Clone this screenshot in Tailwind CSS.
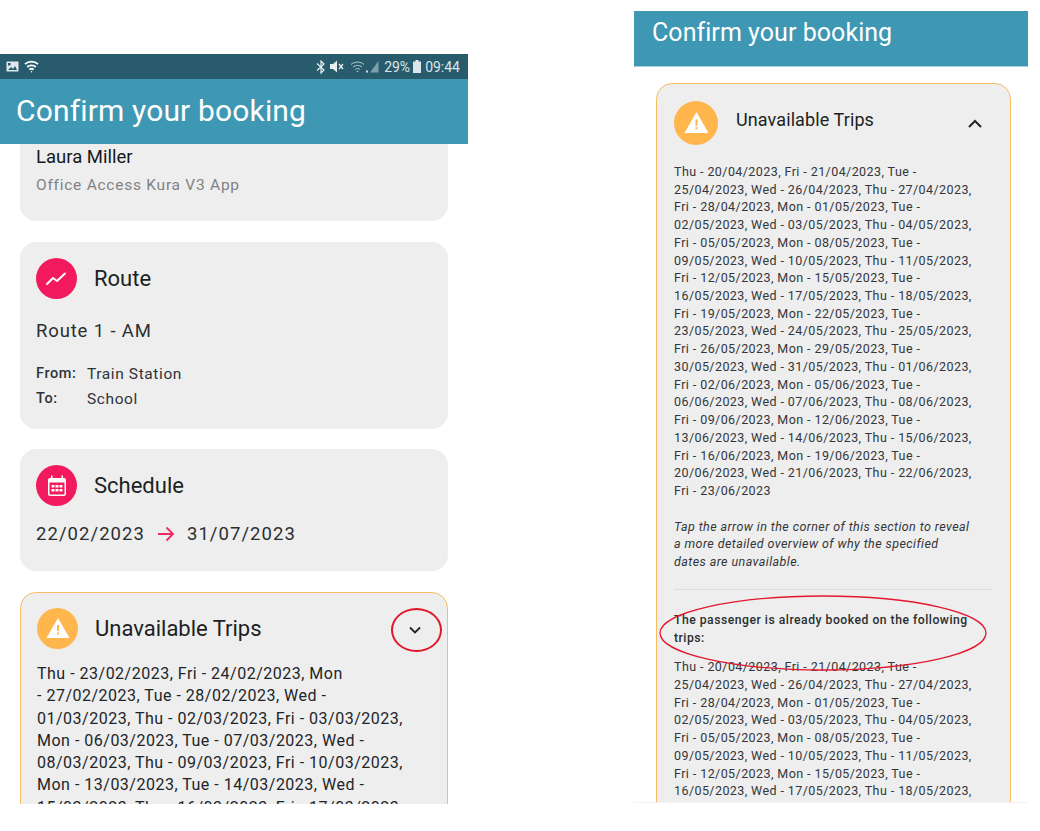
<!DOCTYPE html>
<html lang="en">
<head>
<meta charset="UTF-8">
<title>Confirm your booking</title>
<script src="https://cdn.jsdelivr.net/npm/@tailwindcss/browser@4"></script>
</head>
<body class="bg-white font-['Roboto',sans-serif] text-[#212529]">
<div class="relative flex items-start w-[1040px] h-[831px] overflow-hidden">

  <!-- left phone -->
  <div class="w-[468px] h-[750px] mt-[54px] overflow-hidden shrink-0">
    <div class="h-[25px] bg-[#285c6d] flex items-center justify-between pl-[6px] pr-[8px] text-white">
      <div class="flex items-center gap-[5px]">
        <svg class="w-[13px] h-[11px]" viewBox="0 0 13 11"><rect x="0.5" y="0.5" width="12" height="10" fill="#dfe8eb"/><path d="M2 9l3-3 2 2 2-3 2 4z" fill="#285c6d"/><rect x="2" y="2" width="2.5" height="2.5" fill="#285c6d"/></svg>
        <svg class="w-[15px] h-[13px]" viewBox="0 0 15 13" fill="none" stroke="#fff" stroke-width="1.8"><path d="M1 4.2c3.600-3.400 9.400-3.400 13 0"/><path d="M3.200 7c2.400-2.200 6.200-2.200 8.600 0"/><path d="M5.400 9.600c1.200-1 3-1 4.200 0"/><circle cx="7.500" cy="11.800" r="0.700" fill="#fff" stroke="none"/></svg>
      </div>
      <div class="flex items-center text-[14px] leading-none text-[#dbe6ea]">
        <svg class="w-[10px] h-[14px] mr-[4px]" viewBox="0 0 10 14" fill="none" stroke="#e8eff1" stroke-width="1.200"><path d="M1 3.500l7 6.500-3 3V1l3 3-7 6.500"/></svg>
        <svg class="w-[14px] h-[13px] mr-[6px]" viewBox="0 0 14 13"><path d="M0 4h3l4-3.500v12L3 9H0z" fill="#e8eff1"/><path d="M9 4l4 5M13 4L9 9" stroke="#e8eff1" stroke-width="1.300"/></svg>
        <svg class="w-[15px] h-[13px] mr-[1px]" viewBox="0 0 15 13" fill="none" stroke="#b9ccd3" stroke-width="1"><path d="M1 4.500c3.600-3.200 9.400-3.200 13 0"/><path d="M3 7c2.500-2 6.500-2 9 0"/><path d="M5.200 9.300c1.400-1 3.200-1 4.600 0"/><circle cx="7.500" cy="11.500" r="0.800" fill="#b9ccd3" stroke="none"/></svg>
        <svg class="w-[13px] h-[12px] mr-[5px]" viewBox="0 0 13 12"><rect x="0" y="9.500" width="2" height="2" fill="#d5e0e4"/><path d="M12.500 0v11.500H4z" fill="#7f9fab"/></svg>
        <span class="mr-[3px]">29%</span>
        <svg class="w-[8px] h-[13px] mr-[4px]" viewBox="0 0 8 13"><path d="M2.500 0h3v1.500H8V13H0V1.500h2.500z" fill="#dbe6ea"/></svg>
        <span>09:44</span>
      </div>
    </div>
    <div class="h-[65px] bg-[#3e97b3] flex items-center pl-4 pb-[1px] text-white text-[30px] leading-none tracking-[0.15px]">Confirm your booking</div>

    <div class="mx-5 w-[428px] h-[77px] bg-[#eeeeee] rounded-b-2xl px-4 pt-[3px]">
      <p class="text-[18.5px] leading-[21px] text-[#16191d]">Laura Miller</p>
      <p class="mt-[7px] text-[15.5px] leading-[21px] tracking-[0.75px] text-[#808285]">Office Access Kura V3 App</p>
    </div>

    <div class="mx-5 w-[428px] h-[187px] mt-[21px] bg-[#eeeeee] rounded-2xl px-4 pt-4">
      <div class="flex items-center gap-[17px]">
        <div class="w-[41px] h-[41px] rounded-full bg-[#f2195e] flex items-center justify-center">
          <svg class="w-[24px] h-[24px]" viewBox="0 0 24 24" fill="none" stroke="#fff" stroke-width="2" stroke-linecap="round" stroke-linejoin="round"><path d="M2 17l6-6 4 3 8-7.500"/></svg>
        </div>
        <h2 class="text-[22px] leading-none text-[#1c1f23]">Route</h2>
      </div>
      <p class="mt-[20px] text-[18.5px] leading-[24px] tracking-[0.85px] text-[#2b2e31]">Route 1 - AM</p>
      <div class="mt-[19px] text-[15.5px] leading-[24.500px] tracking-[0.6px] text-[#303336]">
        <div class="flex"><span class="w-[51px] font-medium text-[14.5px]">From:</span><span>Train Station</span></div>
        <div class="flex"><span class="w-[51px] font-medium text-[14.5px]">To:</span><span>School</span></div>
      </div>
    </div>

    <div class="mx-5 w-[428px] h-[122px] mt-[20px] bg-[#eeeeee] rounded-2xl px-4 pt-4">
      <div class="flex items-center gap-[17px]">
        <div class="w-[41px] h-[41px] rounded-full bg-[#f2195e] flex items-center justify-center">
          <svg class="w-[20px] h-[22px]" viewBox="0 0 20 22"><path fill="#fff" fill-rule="evenodd" d="M4 0.500h1.500V3h9V0.500H16V3h1a2 2 0 0 1 2 2v14a2 2 0 0 1-2 2H3a2 2 0 0 1-2-2V5a2 2 0 0 1 2-2h1zM2.500 7.500V19a.5.5 0 0 0 .5.500h14a.5.5 0 0 0 .5-.5V7.500z"/><path fill="#fff" d="M4.500 10h3v2.500h-3zM8.500 10h3v2.500h-3zM12.500 10h3v2.500h-3zM4.500 14h3v2.500h-3zM8.500 14h3v2.500h-3zM12.500 14h3v2.500h-3z"/></svg>
        </div>
        <h2 class="text-[22px] leading-none text-[#1c1f23]">Schedule</h2>
      </div>
      <div class="mt-[16px] flex items-center text-[18.500px] leading-[24px] tracking-[1.05px] text-[#2b2e31]">
        <span>22/02/2023</span>
        <svg class="w-[18px] h-[18px] mx-[12px]" viewBox="0 0 18 18" fill="none" stroke="#ee2a66" stroke-width="1.800"><path d="M1 9h15M9.500 2.500L16 9l-6.500 6.500"/></svg>
        <span>31/07/2023</span>
      </div>
    </div>

    <div class="mx-5 w-[428px] h-[400px] mt-[21px] bg-[#eeeeee] rounded-2xl border border-[#f6bd62] px-4 pt-[15px]">
      <div class="flex items-center gap-[17px]">
        <div class="w-[41px] h-[41px] rounded-full bg-[#ffb64d] flex items-center justify-center">
          <svg class="w-[24px] h-[22px] mb-[1px]" viewBox="0 0 24 22"><path fill="#fff" d="M12 1l11.500 20H.5z"/><rect x="11" y="8" width="2" height="6" fill="#ffb64d"/><rect x="11" y="15.500" width="2" height="2" fill="#ffb64d"/></svg>
        </div>
        <h2 class="text-[22px] leading-none text-[#1c1f23]">Unavailable Trips</h2>
        <svg class="w-[14px] h-[9px] ml-auto mr-[9px] mt-[3px]" viewBox="0 0 14 9" fill="none" stroke="#212529" stroke-width="1.800"><path d="M2 1.500l5 5 5-5"/></svg>
      </div>
      <p class="mt-[14px] text-[16px] leading-[22.300px] tracking-[0.5px] whitespace-nowrap text-[#212529]">
        Thu - 23/02/2023, Fri - 24/02/2023, Mon<br>
        - 27/02/2023, Tue - 28/02/2023, Wed -<br>
        01/03/2023, Thu - 02/03/2023, Fri - 03/03/2023,<br>
        Mon - 06/03/2023, Tue - 07/03/2023, Wed -<br>
        08/03/2023, Thu - 09/03/2023, Fri - 10/03/2023,<br>
        Mon - 13/03/2023, Tue - 14/03/2023, Wed -<br>
        15/03/2023, Thu - 16/03/2023, Fri - 17/03/2023,
      </p>
    </div>
  </div>

  <!-- right phone -->
  <div class="w-[394px] h-[792px] mt-[11px] ml-[166px] overflow-hidden shrink-0 border-b border-[#f2f2f2]">
    <div class="h-[56px] bg-[#3e97b3] border-b border-[#a9d0dc] flex items-center pl-[18px] pb-[13px] text-white text-[25px] leading-none tracking-[0.05px]">Confirm your booking</div>
    <div class="ml-[22px] w-[355px] h-[800px] mt-[16px] bg-[#eeeeee] rounded-2xl border border-[#f6bd62] pl-[17px] pr-[17px] pt-[17px]">
      <div class="flex items-start">
        <div class="w-[44px] h-[44px] rounded-full bg-[#ffb64d] flex items-center justify-center">
          <svg class="w-[25px] h-[23px] mb-[2px]" viewBox="0 0 24 22"><path fill="#fff" d="M12 1l11.500 20H.5z"/><rect x="11" y="8" width="2" height="6" fill="#ffb64d"/><rect x="11" y="15.500" width="2" height="2" fill="#ffb64d"/></svg>
        </div>
        <h2 class="ml-[18px] mt-[8px] text-[18px] leading-[21px] tracking-[0.1px] text-[#1c1f23]">Unavailable Trips</h2>
        <svg class="w-[16px] h-[10px] ml-auto mr-[10px] mt-[18px]" viewBox="0 0 16 10" fill="none" stroke="#212529" stroke-width="2"><path d="M2 8l6-6 6 6"/></svg>
      </div>
      <p class="mt-[18px] text-[12.500px] leading-[17.720px] tracking-[0.42px] whitespace-nowrap text-[#33363a]">
        Thu - 20/04/2023, Fri - 21/04/2023, Tue -<br>
        25/04/2023, Wed - 26/04/2023, Thu - 27/04/2023,<br>
        Fri - 28/04/2023, Mon - 01/05/2023, Tue -<br>
        02/05/2023, Wed - 03/05/2023, Thu - 04/05/2023,<br>
        Fri - 05/05/2023, Mon - 08/05/2023, Tue -<br>
        09/05/2023, Wed - 10/05/2023, Thu - 11/05/2023,<br>
        Fri - 12/05/2023, Mon - 15/05/2023, Tue -<br>
        16/05/2023, Wed - 17/05/2023, Thu - 18/05/2023,<br>
        Fri - 19/05/2023, Mon - 22/05/2023, Tue -<br>
        23/05/2023, Wed - 24/05/2023, Thu - 25/05/2023,<br>
        Fri - 26/05/2023, Mon - 29/05/2023, Tue -<br>
        30/05/2023, Wed - 31/05/2023, Thu - 01/06/2023,<br>
        Fri - 02/06/2023, Mon - 05/06/2023, Tue -<br>
        06/06/2023, Wed - 07/06/2023, Thu - 08/06/2023,<br>
        Fri - 09/06/2023, Mon - 12/06/2023, Tue -<br>
        13/06/2023, Wed - 14/06/2023, Thu - 15/06/2023,<br>
        Fri - 16/06/2023, Mon - 19/06/2023, Tue -<br>
        20/06/2023, Wed - 21/06/2023, Thu - 22/06/2023,<br>
        Fri - 23/06/2023
      </p>
      <p class="mt-[18px] text-[12.500px] leading-[17.720px] tracking-[0.42px] italic whitespace-nowrap text-[#33363a]">
        Tap the arrow in the corner of this section to reveal<br>
        a more detailed overview of why the specified<br>
        dates are unavailable.
      </p>
      <div class="mt-[18px] border-t border-[#dddddd]"></div>
      <p class="mt-[22px] text-[12.200px] leading-[17.720px] tracking-[0.5px] font-medium whitespace-nowrap text-[#2b2e31]">
        The passenger is already booked on the following<br>
        trips:
      </p>
      <p class="mt-[11px] text-[12.500px] leading-[17.720px] tracking-[0.42px] whitespace-nowrap text-[#33363a]">
        Thu - 20/04/2023, Fri - 21/04/2023, Tue -<br>
        25/04/2023, Wed - 26/04/2023, Thu - 27/04/2023,<br>
        Fri - 28/04/2023, Mon - 01/05/2023, Tue -<br>
        02/05/2023, Wed - 03/05/2023, Thu - 04/05/2023,<br>
        Fri - 05/05/2023, Mon - 08/05/2023, Tue -<br>
        09/05/2023, Wed - 10/05/2023, Thu - 11/05/2023,<br>
        Fri - 12/05/2023, Mon - 15/05/2023, Tue -<br>
        16/05/2023, Wed - 17/05/2023, Thu - 18/05/2023,
      </p>
    </div>
  </div>

  <!-- red annotation rings -->
  <div class="absolute left-[391px] top-[608px] w-[51px] h-[44px] rounded-[50%] border-[2px] border-[#e3172c]"></div>
  <svg class="absolute left-[658px] top-[595px]" width="332" height="78" viewBox="0 0 332 78" fill="none"><ellipse cx="165" cy="38" rx="163" ry="37" stroke="#e3172c" stroke-width="1.300"/></svg>
</div>
</body>
</html>
